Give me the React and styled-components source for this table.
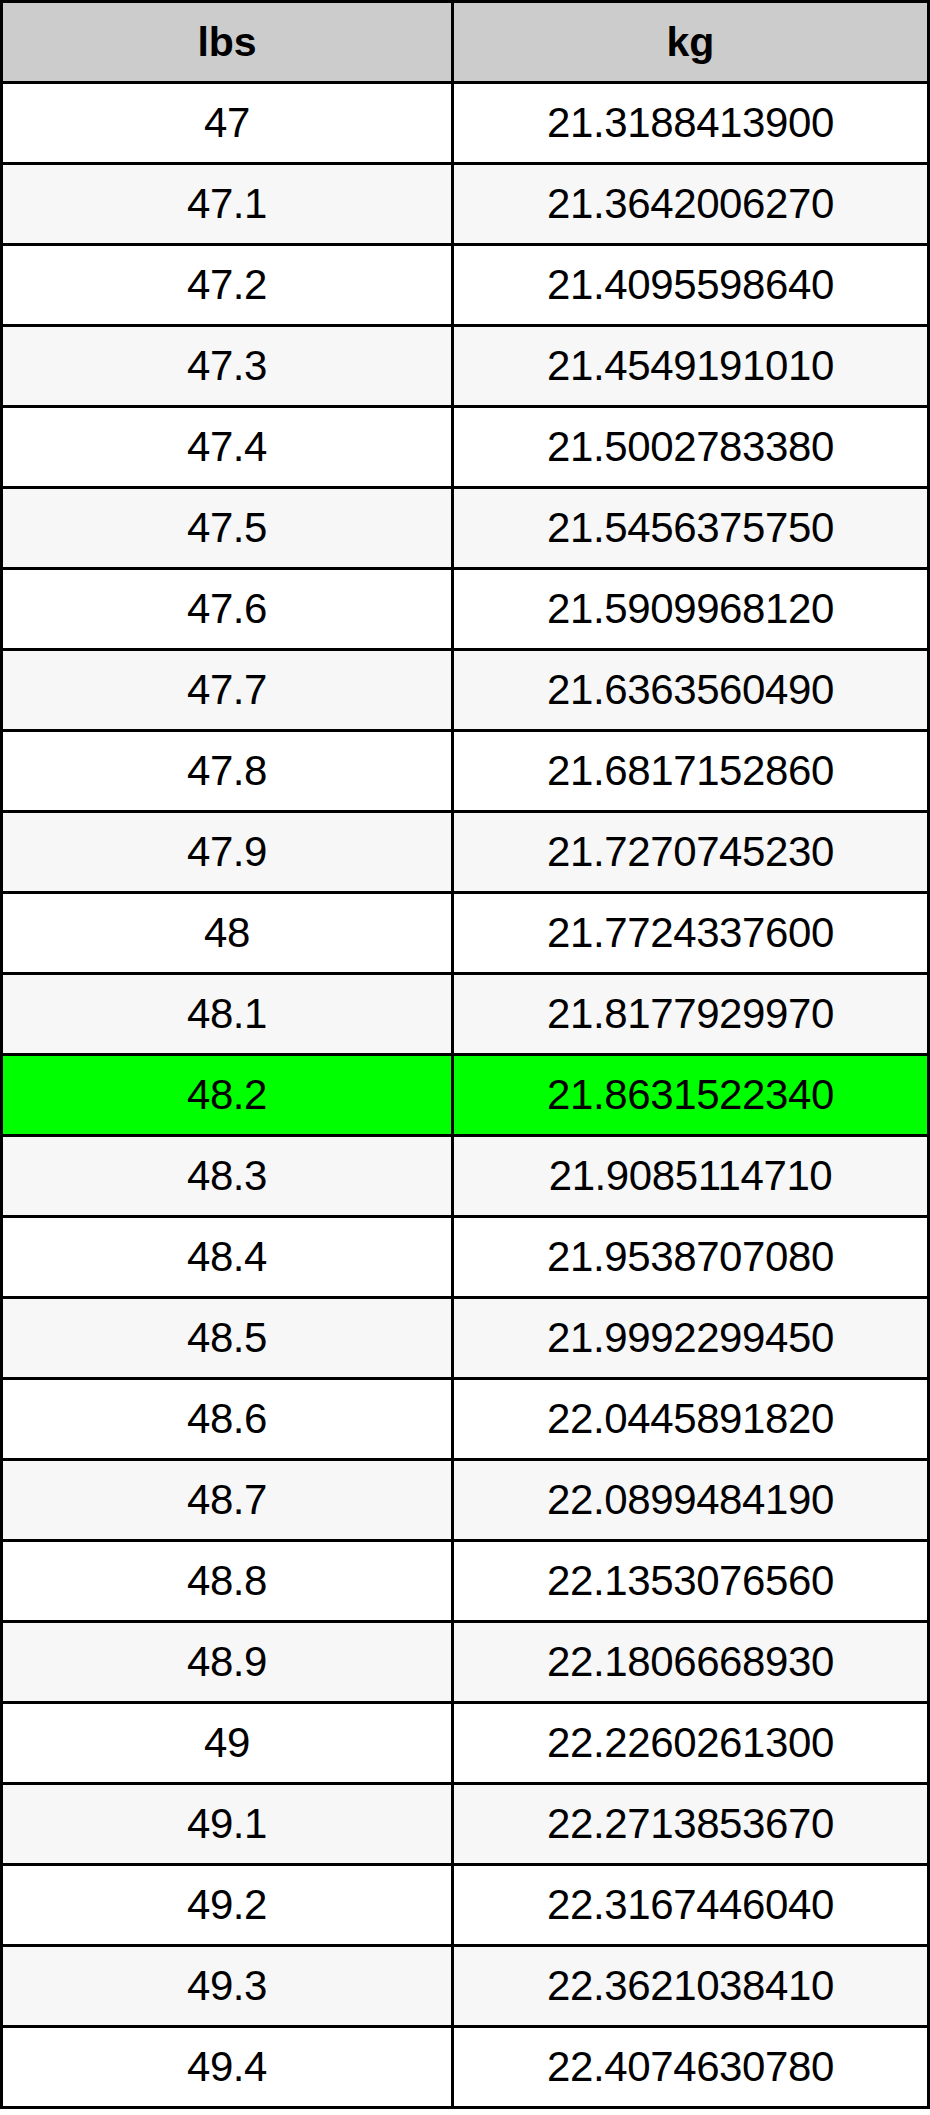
import React from "react";
import styled, { createGlobalStyle } from "styled-components";

const GlobalStyle = createGlobalStyle`
  html, body {
    margin: 0;
    padding: 0;
    background: #ffffff;
  }
`;

const Table = styled.table`
  width: 930px;
  border-collapse: collapse;
  border: 3px solid #000;
  font-family: "Liberation Sans", Arial, sans-serif;
  color: #000;
  table-layout: fixed;
`;

const HeadCell = styled.th`
  height: 78px;
  padding: 0;
  border: 3px solid #000;
  background: #cccccc;
  font-size: 41px;
  font-weight: bold;
  text-align: center;
  vertical-align: middle;
`;

const Row = styled.tr`
  background: ${(p) => (p.$active ? "#00ff00" : p.$shade ? "#f7f7f7" : "#ffffff")};
`;

const Cell = styled.td`
  height: 78px;
  padding: 0;
  border: 3px solid #000;
  font-size: 42px;
  letter-spacing: -0.4px;
  text-align: center;
  vertical-align: middle;
`;

const rows = [
  ["47", "21.3188413900"],
  ["47.1", "21.3642006270"],
  ["47.2", "21.4095598640"],
  ["47.3", "21.4549191010"],
  ["47.4", "21.5002783380"],
  ["47.5", "21.5456375750"],
  ["47.6", "21.5909968120"],
  ["47.7", "21.6363560490"],
  ["47.8", "21.6817152860"],
  ["47.9", "21.7270745230"],
  ["48", "21.7724337600"],
  ["48.1", "21.8177929970"],
  ["48.2", "21.8631522340"],
  ["48.3", "21.9085114710"],
  ["48.4", "21.9538707080"],
  ["48.5", "21.9992299450"],
  ["48.6", "22.0445891820"],
  ["48.7", "22.0899484190"],
  ["48.8", "22.1353076560"],
  ["48.9", "22.1806668930"],
  ["49", "22.2260261300"],
  ["49.1", "22.2713853670"],
  ["49.2", "22.3167446040"],
  ["49.3", "22.3621038410"],
  ["49.4", "22.4074630780"],
];

export default function App() {
  return (
    <>
      <GlobalStyle />
      <Table>
        <colgroup>
          <col style={{ width: "451px" }} />
          <col />
        </colgroup>
        <thead>
          <tr>
            <HeadCell>lbs</HeadCell>
            <HeadCell>kg</HeadCell>
          </tr>
        </thead>
        <tbody>
          {rows.map(([lbs, kg], i) => (
            <Row key={lbs} $shade={i % 2 === 1} $active={lbs === "48.2"}>
              <Cell>{lbs}</Cell>
              <Cell>{kg}</Cell>
            </Row>
          ))}
        </tbody>
      </Table>
    </>
  );
}
